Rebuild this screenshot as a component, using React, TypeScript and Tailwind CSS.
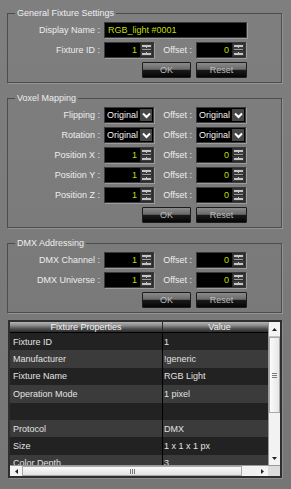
import React from "react";

function Spin() {
  return (
    <svg width="13" height="14" viewBox="0 0 13 14" className="block shrink-0">
      <rect width="13" height="14" fill="#2b2b2b" />
      <rect x="1" y="1" width="11" height="5" fill="#3c3c3c" />
      <rect x="1" y="8" width="11" height="5" fill="#3c3c3c" />
      <rect x="2" y="2" width="9" height="2" fill="#c4c4c4" />
      <rect x="2" y="6" width="9" height="1" fill="#9a9a9a" />
      <rect x="2" y="10" width="9" height="2" fill="#c4c4c4" />
      <rect x="6" y="4" width="1" height="1" fill="#c4c4c4" />
      <rect x="6" y="9" width="1" height="1" fill="#c4c4c4" />
    </svg>
  );
}

function NumBox({ value }: { value: string }) {
  return (
    <div className="flex h-[16px] w-[50px] items-center border border-[#3a3a3a] bg-black shadow-[1px_1px_0_#9c9c9c]">
      <div className="flex-1 pr-[3px] text-right leading-[14px] text-[#c2de00]">{value}</div>
      <Spin />
    </div>
  );
}

function Drop() {
  return (
    <div className="flex h-[16px] w-[50px] items-center border border-[#3a3a3a] bg-black shadow-[1px_1px_0_#9c9c9c]">
      <div className="flex-1 pl-[2px] leading-[14px] text-[#f2f2f2]">Original</div>
      <div className="mr-[1px] flex h-[12px] w-[12px] items-center justify-center bg-[#474747]">
        <svg width="9" height="7" viewBox="0 0 9 7" className="block">
          <path d="M1 1.5 L4.5 5 L8 1.5" fill="none" stroke="#ffffff" strokeWidth="2" />
        </svg>
      </div>
    </div>
  );
}

function Row({ label, left, right }: { label: string; left: React.ReactNode; right: React.ReactNode }) {
  return (
    <div className="flex h-[16px] items-center">
      <div className="w-[92px] text-right text-[#ededed]">{label}</div>
      <div className="w-[4px]" />
      {left}
      <div className="w-[38px] text-right text-[#ededed]">Offset :</div>
      <div className="w-[4px]" />
      {right}
    </div>
  );
}

function Buttons() {
  return (
    <div className="flex h-[16px] items-center pl-[134px]">
      <div className="flex h-[16px] w-[49px] items-center justify-center rounded-[1px] border border-[#1c1c1c] bg-[linear-gradient(to_bottom,#8a8a8a_0%,#6a6a6a_45%,#1a1a1a_52%,#050505_100%)] text-[#bdbdbd]">
        OK
      </div>
      <div className="w-[5px]" />
      <div className="flex h-[16px] w-[51px] items-center justify-center rounded-[1px] border border-[#1c1c1c] bg-[linear-gradient(to_bottom,#8a8a8a_0%,#6a6a6a_45%,#1a1a1a_52%,#050505_100%)] text-[#bdbdbd]">
        Reset
      </div>
    </div>
  );
}

function Group({ title, className, children }: { title: string; className: string; children: React.ReactNode }) {
  return (
    <fieldset
      className={
        "ml-[7px] w-[275px] border border-[#4d4d4d] pt-[3px] pb-[4px] shadow-[1px_1px_0_#949494] " + className
      }
    >
      <legend className="ml-[7px] px-[2px] leading-[12px] text-[#efefef]">{title}</legend>
      <div className="flex flex-col gap-[4px]">{children}</div>
    </fieldset>
  );
}

const rows: [string, string][] = [
  ["Fixture ID", "1"],
  ["Manufacturer", "!generic"],
  ["Fixture Name", "RGB Light"],
  ["Operation Mode", "1 pixel"],
  ["", ""],
  ["Protocol", "DMX"],
  ["Size", "1 x 1 x 1 px"],
  ["Color Depth", "3"],
];

export default function App() {
  return (
    <div className="h-[489px] w-[291px] overflow-hidden bg-[linear-gradient(to_bottom,#7f7f7f,#767676)] font-['Liberation_Sans',Arial,sans-serif] text-[9px] leading-[12px] pt-[7px]">
      <Group title="General Fixture Settings" className="">
        <div className="flex h-[16px] items-center">
          <div className="w-[92px] text-right text-[#ededed]">Display Name :</div>
          <div className="w-[4px]" />
          <div className="flex h-[16px] w-[143px] items-center border border-[#3a3a3a] bg-black pl-[3px] text-[#c2de00] shadow-[1px_1px_0_#9c9c9c]">
            RGB_light #0001
          </div>
        </div>
        <Row label="Fixture ID :" left={<NumBox value="1" />} right={<NumBox value="0" />} />
        <Buttons />
      </Group>

      <Group title="Voxel Mapping" className="mt-[9px]">
        <Row label="Flipping :" left={<Drop />} right={<Drop />} />
        <Row label="Rotation :" left={<Drop />} right={<Drop />} />
        <Row label="Position X :" left={<NumBox value="1" />} right={<NumBox value="0" />} />
        <Row label="Position Y :" left={<NumBox value="1" />} right={<NumBox value="0" />} />
        <Row label="Position Z :" left={<NumBox value="1" />} right={<NumBox value="0" />} />
        <Buttons />
      </Group>

      <Group title="DMX Addressing" className="mt-[9px]">
        <Row label="DMX Channel :" left={<NumBox value="1" />} right={<NumBox value="0" />} />
        <Row label="DMX Universe :" left={<NumBox value="1" />} right={<NumBox value="0" />} />
        <Buttons />
      </Group>

      <div className="ml-[8px] mt-[7px] w-[274px] border-2 border-[#2e2e2e] shadow-[1px_1px_0_#8e8e8e]">
        <div className="flex h-[143px]">
          <div className="flex w-[258px] flex-col overflow-hidden">
            <div className="flex h-[11px] shrink-0 border-b border-black bg-[linear-gradient(to_bottom,#b4b4b4_0%,#8a8a8a_35%,#4a4a4a_70%,#2c2c2c_100%)] text-[#f4f4f4] leading-[10px]">
              <div className="w-[152px] text-center">Fixture Properties</div>
              <div className="w-[1px] bg-[#2a2a2a]" />
              <div className="w-[105px] pl-[8px] text-center">Value</div>
            </div>
            {rows.map(([k, v], i) => (
              <div
                key={i}
                className={
                  "flex h-[17.4px] shrink-0 items-center text-[#e2e2e2] " +
                  (i % 2 === 0 ? "bg-[#222222]" : "bg-[#3b3b3b]")
                }
              >
                <div className="w-[152px] pl-[3px]">{k}</div>
                <div className="h-full w-[1px] bg-black" />
                <div className="w-[105px] pl-[1px]">{v}</div>
              </div>
            ))}
          </div>
          <div className="flex w-[12px] flex-col border-l border-[#9a9a9a] bg-[#eeeeee]">
            <div className="flex h-[15px] items-center justify-center border-b border-[#c4c4c4] bg-[#f4f4f4]">
              <svg width="5" height="3" viewBox="0 0 5 3" className="block">
                <path d="M0 3 L2.5 0 L5 3Z" fill="#222" />
              </svg>
            </div>
            <div className="flex h-[76px] items-center justify-center border border-[#a9a9a9] bg-[linear-gradient(to_right,#fbfbfb,#e6e6e6)]">
              <div className="flex flex-col gap-[1px]">
                <div className="h-[1px] w-[5px] bg-[#7a7a7a]" />
                <div className="h-[1px] w-[5px] bg-[#7a7a7a]" />
                <div className="h-[1px] w-[5px] bg-[#7a7a7a]" />
              </div>
            </div>
            <div className="flex-1 bg-[#f2f2f2]" />
            <div className="flex h-[13px] items-center justify-center bg-[#f4f4f4]">
              <svg width="5" height="3" viewBox="0 0 5 3" className="block">
                <path d="M0 0 L2.5 3 L5 0Z" fill="#222" />
              </svg>
            </div>
          </div>
        </div>
        <div className="flex h-[11px] border-t border-[#9a9a9a]">
          <div className="flex w-[258px] bg-[#eeeeee]">
            <div className="flex w-[12px] items-center justify-center bg-[#f4f4f4]">
              <svg width="3" height="5" viewBox="0 0 3 5" className="block">
                <path d="M3 0 L0 2.5 L3 5Z" fill="#222" />
              </svg>
            </div>
            <div className="flex w-[220px] items-center justify-center border border-[#a9a9a9] bg-[linear-gradient(to_bottom,#fbfbfb,#e2e2e2)]">
              <div className="flex gap-[1px]">
                <div className="h-[5px] w-[1px] bg-[#7a7a7a]" />
                <div className="h-[5px] w-[1px] bg-[#7a7a7a]" />
                <div className="h-[5px] w-[1px] bg-[#7a7a7a]" />
              </div>
            </div>
            <div className="flex-1 bg-[#f2f2f2]" />
            <div className="flex w-[12px] items-center justify-center bg-[#f4f4f4]">
              <svg width="3" height="5" viewBox="0 0 3 5" className="block">
                <path d="M0 0 L3 2.5 L0 5Z" fill="#222" />
              </svg>
            </div>
          </div>
          <div className="w-[12px] bg-[#dcdcdc]" />
        </div>
      </div>
    </div>
  );
}
